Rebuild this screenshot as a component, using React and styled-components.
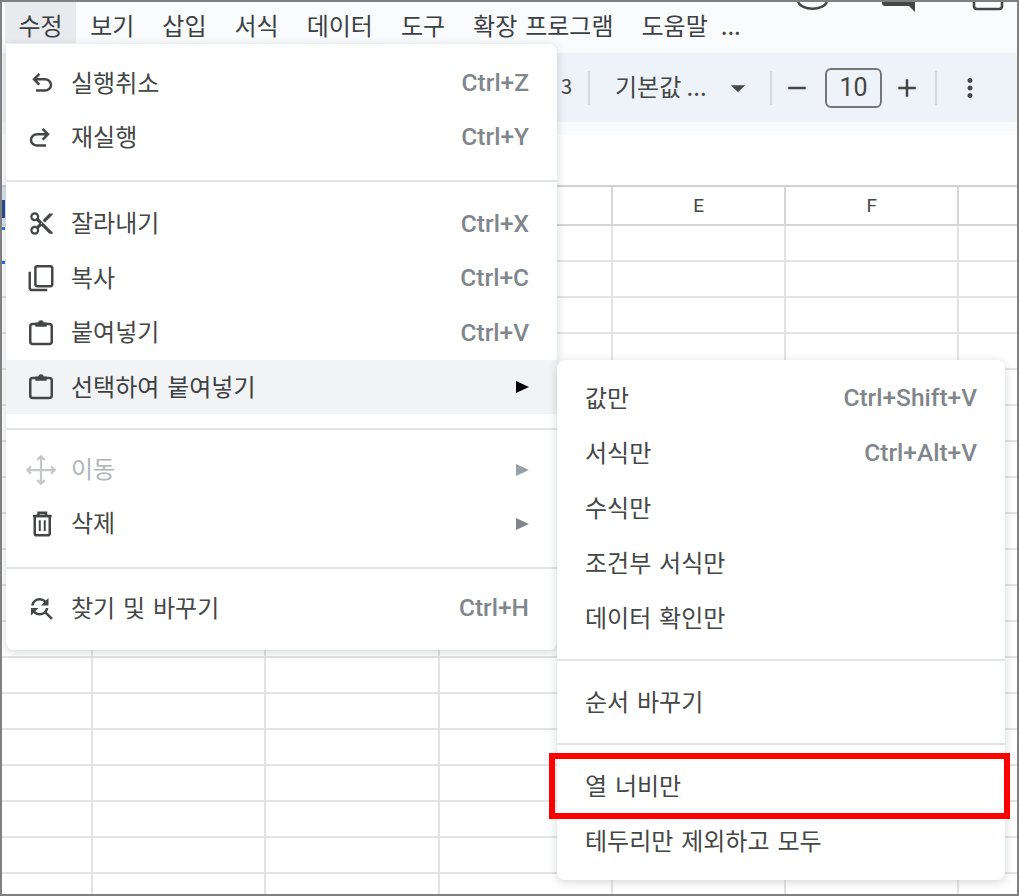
// Packages
import React from "react"
import styled, { createGlobalStyle } from "styled-components"
import { MdOutlineContentCut, MdOutlineFindReplace, MdMoreVert, MdAdd, MdRemove, MdArrowDropDown } from "react-icons/md"

// Icons
const Svg = ({ children }) => (
    <svg width="30" height="30" viewBox="0 0 24 24" fill="none" stroke="currentColor" strokeWidth="2">
        {children}
    </svg>
)

const UndoIcon = () => (
    <Svg>
        <path
            stroke="none"
            fill="currentColor"
            d="M8 19v-2h7.1q1.575 0 2.738-1T19 13.5q0-1.5-1.162-2.5T15.1 10H8.8l2.6 2.6L10 14 5 9l5-5 1.4 1.4L8.8 8h6.3q2.425 0 4.163 1.575T21 13.5q0 2.35-1.737 3.925T15.1 19H8Z"
        />
    </Svg>
)

const RedoIcon = () => (
    <Svg>
        <path
            stroke="none"
            fill="currentColor"
            transform="matrix(-1 0 0 1 24 0)"
            d="M8 19v-2h7.1q1.575 0 2.738-1T19 13.5q0-1.5-1.162-2.5T15.1 10H8.8l2.6 2.6L10 14 5 9l5-5 1.4 1.4L8.8 8h6.3q2.425 0 4.163 1.575T21 13.5q0 2.35-1.737 3.925T15.1 19H8Z"
        />
    </Svg>
)

const CutIcon = styled(MdOutlineContentCut)`
    font-size: 27px;
`

const CopyIcon = () => (
    <Svg>
        <rect x="7.5" y="2.5" width="13.5" height="16" rx="1.5" />
        <path d="M3 7v13q0 1.5 1.5 1.5H17" />
    </Svg>
)

const PasteIcon = () => (
    <Svg>
        <rect x="3.4" y="4.8" width="17.2" height="16" rx="2" />
        <path stroke="none" fill="currentColor" d="M7.5 7V3.5h2.2a2.4 2.4 0 0 1 4.6 0h2.2V7Z" />
    </Svg>
)

const MoveIcon = () => (
    <Svg>
        <g strokeWidth="1.8">
            <path d="M12 1v22M1 12h22" />
            <path d="M9 4l3-3 3 3M9 20l3 3 3-3M4 9l-3 3 3 3M20 9l3 3-3 3" />
        </g>
    </Svg>
)

const TrashIcon = () => (
    <Svg>
        <path d="M5.5 5.5h15M10 5.5V3h6v2.5" />
        <rect x="7" y="5.5" width="12" height="15.5" rx="1.5" />
        <path d="M11 9v8.5M15 9v8.5" strokeWidth="1.6" />
    </Svg>
)

// Data
const MenuBarItems = ["수정", "보기", "삽입", "서식", "데이터", "도구", "확장 프로그램", "도움말", "..."]

const EditMenu = [
    {
        rows: [
            { icon: UndoIcon, label: "실행취소", shortcut: "Ctrl+Z" },
            { icon: RedoIcon, label: "재실행", shortcut: "Ctrl+Y" },
        ],
    },
    {
        above: 15,
        below: 15,
        rows: [
            { icon: CutIcon, label: "잘라내기", shortcut: "Ctrl+X" },
            { icon: CopyIcon, label: "복사", shortcut: "Ctrl+C" },
            { icon: PasteIcon, label: "붙여넣기", shortcut: "Ctrl+V" },
            { icon: PasteIcon, label: "선택하여 붙여넣기", arrow: "#000000", active: true },
        ],
    },
    {
        above: 14,
        below: 12,
        rows: [
            { icon: MoveIcon, label: "이동", arrow: "#9aa0a6", disabled: true },
            { icon: TrashIcon, label: "삭제", arrow: "#80868b" },
        ],
    },
    {
        above: 16,
        below: 12,
        rows: [{ icon: MdOutlineFindReplace, label: "찾기 및 바꾸기", shortcut: "Ctrl+H" }],
    },
]

const PasteMenu = [
    {
        rows: [
            { label: "값만", shortcut: "Ctrl+Shift+V" },
            { label: "서식만", shortcut: "Ctrl+Alt+V" },
            { label: "수식만" },
            { label: "조건부 서식만" },
            { label: "데이터 확인만" },
        ],
    },
    { above: 13, below: 14, rows: [{ label: "순서 바꾸기" }] },
    { above: 13, below: 14, rows: [{ label: "열 너비만" }, { label: "테두리만 제외하고 모두" }] },
]

const Columns = ["", "", "", "", "E", "F", ""]

// Styles
const GlobalStyle = createGlobalStyle`
    html, body {
        margin: 0;
        padding: 0;
        background: #ffffff;
    }

    * {
        box-sizing: border-box;
    }
`

const Frame = styled.div`
    position: relative;
    width: 1019px;
    height: 896px;
    overflow: hidden;
    border: 2px solid #808080;
    background: #ffffff;
    font-family: "Noto Sans CJK KR", "Noto Sans", sans-serif;
    color: #444746;
`

const TopArea = styled.div`
    height: 133px;
    background: #f9fbfd;
`

const MenuBar = styled.nav`
    position: relative;
    display: flex;
    align-items: flex-start;
    height: 51px;
    padding-left: 3px;
`

const MenuBarItem = styled.span`
    height: 41px;
    padding: 4px ${({ $active }) => ($active ? "13.5px" : "14px")} 0;
    margin-left: ${({ $tight }) => ($tight ? "-15px" : "0")};
    display: flex;
    align-items: center;
    white-space: nowrap;
    word-spacing: 2.5px;
    font-size: 24px;
    line-height: 1;
    color: #3c4043;
    background: ${({ $active }) => ($active ? "#e8eaed" : "transparent")};
`

const ClippedIcons = styled.svg`
    position: absolute;
    top: 0;
    right: 0;
`

const Toolbar = styled.div`
    display: flex;
    align-items: center;
    height: 69px;
    padding-left: 559px;
    background: #eef2f9;
    color: #444746;
`

const ToolText = styled.span`
    font-size: ${({ $size }) => $size || 24}px;
    line-height: 1;
    width: ${({ $width }) => $width}px;
    padding-bottom: 3px;
    white-space: nowrap;
`

const ToolDivider = styled.span`
    width: 2px;
    height: 34px;
    background: #d6d9dd;
    margin: 0 ${({ $right }) => $right}px 0 ${({ $left }) => $left}px;
`

const FontCaret = styled(MdArrowDropDown)`
    margin-left: 16px;
`

const SizeBox = styled.span`
    width: 57px;
    height: 40px;
    display: flex;
    align-items: center;
    justify-content: center;
    border: 2px solid #747775;
    border-radius: 6px;
    font-family: Roboto, sans-serif;
    font-size: 25px;
    margin: 0 10px 0 13px;
`

const Sheet = styled.div`
    display: grid;
    grid-template-columns: 91px repeat(6, 173.3px);
    grid-template-rows: 39px;
    grid-auto-rows: 36px;
    margin-top: 50px;
    border-top: 2px solid #cfd1d3;
`

const HeaderCell = styled.div`
    display: flex;
    align-items: center;
    justify-content: center;
    font-family: Roboto, sans-serif;
    font-size: 19px;
    color: #444746;
    border-right: 2px solid #d5d6d7;
    border-bottom: 2px solid #d5d6d7;
    background: ${({ $selected }) =>
        $selected ? "linear-gradient(90deg, #d9e4f7 0 4px, transparent 4px)" : "transparent"};
`

const Cell = styled.div`
    border-right: 2px solid #e4e4e4;
    border-bottom: 2px solid #e4e4e4;
`

const RowMark = styled.span`
    position: absolute;
    left: 0;
    top: ${({ $top }) => $top}px;
    width: 3px;
    height: ${({ $height }) => $height}px;
    background: ${({ $color }) => $color};
`

const Menu = styled.div`
    position: absolute;
    left: ${({ $left }) => $left}px;
    top: ${({ $top }) => $top}px;
    width: ${({ $width }) => $width}px;
    padding: ${({ $padTop }) => $padTop}px 0 ${({ $padBottom }) => $padBottom}px;
    background: #ffffff;
    border-radius: ${({ $radius }) => $radius};
    box-shadow: 0 2px 10px rgba(60, 64, 67, 0.22);
`

const MenuRow = styled.div`
    display: flex;
    align-items: center;
    height: ${({ $height }) => $height}px;
    padding: 0 28px 0 ${({ $plain }) => ($plain ? "28px" : "19px")};
    font-size: 24px;
    line-height: 1;
    white-space: nowrap;
    word-spacing: 2.5px;
    color: ${({ $disabled, $active }) => ($disabled ? "#b1b4b8" : $active ? "#3c4043" : "#444746")};
    background: ${({ $active }) => ($active ? "#f1f3f4" : "transparent")};
`

const Label = styled.span`
    padding-bottom: 3px;
`

const IconSlot = styled.span`
    display: flex;
    align-items: center;
    justify-content: center;
    width: 32px;
    margin-right: 14px;
    font-size: 30px;
    color: ${({ $disabled }) => ($disabled ? "#c4c7c9" : "#444746")};
`

const Shortcut = styled.span`
    margin-left: auto;
    font-family: Roboto, sans-serif;
    font-weight: 500;
    font-size: 24.5px;
    color: #80868b;
`

const Arrow = styled.span`
    margin-left: auto;
    width: 0;
    height: 0;
    border-left: 13px solid ${({ $color }) => $color};
    border-top: 6px solid transparent;
    border-bottom: 6px solid transparent;
`

const Separator = styled.hr`
    height: 2px;
    margin: ${({ $above }) => $above}px 0 ${({ $below }) => $below}px;
    border: 0;
    background: #e3e4e8;
`

const Highlight = styled.div`
    position: absolute;
    left: 547px;
    top: 751px;
    width: 461px;
    height: 66px;
    border: 6px solid #ff0000;
`

function MenuGroups({ groups, plain, rowHeight }) {
    return groups.map(({ rows, above, below }, i) => (
        <React.Fragment key={i}>
            {i > 0 && <Separator $above={above} $below={below} />}

            {rows.map(({ icon: Icon, label, shortcut, arrow, active, disabled }) => (
                <MenuRow key={label} $height={rowHeight} $plain={plain} $active={active} $disabled={disabled}>
                    {Icon && (
                        <IconSlot $disabled={disabled}>
                            <Icon />
                        </IconSlot>
                    )}
                    <Label>{label}</Label>
                    {shortcut && <Shortcut>{shortcut}</Shortcut>}
                    {arrow && <Arrow $color={arrow} />}
                </MenuRow>
            ))}
        </React.Fragment>
    ))
}

function App() {
    return (
        <Frame>
            <GlobalStyle />

            <TopArea>
                <MenuBar>
                    {MenuBarItems.map((item, i) => (
                        <MenuBarItem key={item} $active={i === 0} $tight={item === "..."}>
                            {item}
                        </MenuBarItem>
                    ))}

                    <ClippedIcons width="240" height="12" viewBox="0 0 240 12" fill="none">
                        <path d="M21 0a15 9 0 0 0 29 0" stroke="#444746" strokeWidth="2.5" />
                        <path d="M105 0v1q0 3 3 3h24l6 6V0" fill="#444746" />
                        <path d="M197 0v4q0 3 3 3h22q3 0 3-3V0" stroke="#444746" strokeWidth="2.5" />
                    </ClippedIcons>
                </MenuBar>

                <Toolbar>
                    <ToolText $width={18} $size={20}>
                        3
                    </ToolText>
                    <ToolDivider $left={9} $right={25} />
                    <ToolText $width={90}>기본값 ...</ToolText>
                    <FontCaret size={34} />
                    <ToolDivider $left={15} $right={10} />
                    <MdRemove size={30} />
                    <SizeBox>10</SizeBox>
                    <MdAdd size={30} />
                    <ToolDivider $left={13} $right={18} />
                    <MdMoreVert size={30} />
                </Toolbar>
            </TopArea>

            <Sheet>
                {Columns.map((name, i) => (
                    <HeaderCell key={i} $selected={i === 0}>
                        {name}
                    </HeaderCell>
                ))}

                {Array.from({ length: 133 }, (_, i) => (
                    <Cell key={i} />
                ))}
            </Sheet>

            <RowMark $top={198} $height={18} $color="#2a4a8c" />
            <RowMark $top={225} $height={3} $color="#1a73e8" />
            <RowMark $top={259} $height={3} $color="#1a73e8" />

            <Menu $left={4} $top={42} $width={551} $padTop={12} $padBottom={14} $radius="0 8px 8px 8px">
                <MenuGroups groups={EditMenu} rowHeight={54.4} />
            </Menu>

            <Menu $left={555} $top={358} $width={448} $padTop={11} $padBottom={11} $radius="8px">
                <MenuGroups groups={PasteMenu} plain rowHeight={55} />
            </Menu>

            <Highlight />
        </Frame>
    )
}

export default App
